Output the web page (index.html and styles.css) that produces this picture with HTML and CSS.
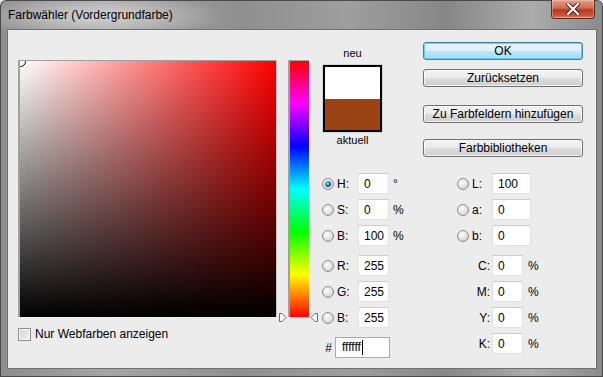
FILE: index.html
```html
<!DOCTYPE html>
<html lang="de">
<head>
    <meta charset="UTF-8">
    <meta name="viewport" content="width=device-width, initial-scale=1.0">
    <title>Farbwähler</title>
    <link rel="stylesheet" href="styles.css">
</head>
<body>
    <div class="window">
        <!-- Title bar -->
        <div class="titlebar">
            <span class="title">Farbwähler (Vordergrundfarbe)</span>
            <button class="close-btn" aria-label="Schließen">
                <svg width="14" height="12" viewBox="0 0 14 12">
                    <path d="M2 1 L12 11 M12 1 L2 11" stroke="#3a1a12" stroke-width="4" stroke-linecap="square"/>
                    <path d="M2 1 L12 11 M12 1 L2 11" stroke="#fff" stroke-width="2.2" stroke-linecap="square"/>
                </svg>
            </button>
        </div>

        <div class="client">
            <!-- Colour field + hue slider -->
            <div class="picker-pane">
                <div class="picker-row">
                    <div class="color-field">
                        <span class="field-marker"></span>
                    </div>
                    <div class="hue-wrap">
                        <div class="hue-slider"></div>
                        <svg class="arrow arrow-left" width="8" height="9" viewBox="0 0 8 9">
                            <path d="M0.5 0.5 L3 0.5 L7 4.5 L3 8.5 L0.5 8.5 Z" fill="#fff" stroke="#6a6a6a"/>
                        </svg>
                        <svg class="arrow arrow-right" width="8" height="9" viewBox="0 0 8 9">
                            <path d="M7.5 0.5 L5 0.5 L1 4.5 L5 8.5 L7.5 8.5 Z" fill="#fff" stroke="#6a6a6a"/>
                        </svg>
                    </div>
                </div>
                <label class="web-only">
                    <span class="checkbox"></span>
                    Nur Webfarben anzeigen
                </label>
            </div>

            <!-- Swatch, buttons and value fields -->
            <div class="control-pane">
                <div class="top-row">
                    <div class="swatch-block">
                        <div class="swatch-label">neu</div>
                        <div class="swatch">
                            <div class="swatch-new"></div>
                            <div class="swatch-current"></div>
                        </div>
                        <div class="swatch-label">aktuell</div>
                    </div>
                    <div class="buttons">
                        <button class="btn btn-default">OK</button>
                        <button class="btn btn-reset">Zurücksetzen</button>
                        <button class="btn btn-add">Zu Farbfeldern hinzufügen</button>
                        <button class="btn btn-lib">Farbbibliotheken</button>
                    </div>
                </div>

                <div class="fields">
                    <div class="field-col field-col-left">
                        <div class="field-row">
                            <span class="radio checked"></span>
                            <span class="field-label">H:</span>
                            <input class="text-box" type="text" value="0">
                            <span class="unit">°</span>
                        </div>
                        <div class="field-row">
                            <span class="radio"></span>
                            <span class="field-label">S:</span>
                            <input class="text-box" type="text" value="0">
                            <span class="unit">%</span>
                        </div>
                        <div class="field-row">
                            <span class="radio"></span>
                            <span class="field-label">B:</span>
                            <input class="text-box" type="text" value="100">
                            <span class="unit">%</span>
                        </div>
                        <div class="field-row group-start">
                            <span class="radio"></span>
                            <span class="field-label">R:</span>
                            <input class="text-box" type="text" value="255">
                        </div>
                        <div class="field-row">
                            <span class="radio"></span>
                            <span class="field-label">G:</span>
                            <input class="text-box" type="text" value="255">
                        </div>
                        <div class="field-row">
                            <span class="radio"></span>
                            <span class="field-label">B:</span>
                            <input class="text-box" type="text" value="255">
                        </div>
                        <div class="field-row group-start">
                            <span class="hash-label">#</span>
                            <div class="hex-box">ffffff<span class="caret"></span></div>
                        </div>
                    </div>

                    <div class="field-col field-col-right">
                        <div class="field-row">
                            <span class="radio"></span>
                            <span class="field-label lab-label">L:</span>
                            <input class="text-box wide" type="text" value="100">
                        </div>
                        <div class="field-row">
                            <span class="radio"></span>
                            <span class="field-label lab-label">a:</span>
                            <input class="text-box wide" type="text" value="0">
                        </div>
                        <div class="field-row">
                            <span class="radio"></span>
                            <span class="field-label lab-label">b:</span>
                            <input class="text-box wide" type="text" value="0">
                        </div>
                        <div class="field-row group-start">
                            <span class="cmyk-label">C:</span>
                            <input class="text-box" type="text" value="0">
                            <span class="unit cmyk-unit">%</span>
                        </div>
                        <div class="field-row">
                            <span class="cmyk-label">M:</span>
                            <input class="text-box" type="text" value="0">
                            <span class="unit cmyk-unit">%</span>
                        </div>
                        <div class="field-row">
                            <span class="cmyk-label">Y:</span>
                            <input class="text-box" type="text" value="0">
                            <span class="unit cmyk-unit">%</span>
                        </div>
                        <div class="field-row">
                            <span class="cmyk-label">K:</span>
                            <input class="text-box" type="text" value="0">
                            <span class="unit cmyk-unit">%</span>
                        </div>
                    </div>
                </div>
            </div>
        </div>
    </div>
</body>
</html>
```

FILE: styles.css
```css
* {
    margin: 0;
    padding: 0;
    box-sizing: border-box;
}

body {
    background: #e6e6e6;
    font-family: 'Liberation Sans', Arial, sans-serif;
    font-size: 12px;
    color: #000;
}

/* Window frame */
.window {
    width: 603px;
    height: 377px;
    display: flex;
    flex-direction: column;
    border-radius: 6px 6px 0 0;
    background:
        radial-gradient(ellipse 130px 22px at 95px 16px, rgba(225, 225, 225, 0.75), transparent),
        linear-gradient(to right, #8d8d8d 0%, #a6a6a6 18%, #8f8f8f 40%, #9e9e9e 58%, #868686 74%, #acacac 88%, #8a8a8a 100%);
    box-shadow: inset 0 0 0 1px #4a4a4a;
}

.titlebar {
    height: 29px;
    display: flex;
    justify-content: space-between;
    align-items: flex-start;
    padding-left: 8px;
}

.title {
    margin-top: 8px;
    line-height: 15px;
    font-size: 12px;
    color: #000;
}

.close-btn {
    width: 44px;
    height: 19px;
    margin-right: 8px;
    border: 1px solid #5a2a1c;
    border-top: none;
    border-radius: 0 0 4px 4px;
    background: linear-gradient(#e3a28f 0%, #cf6b50 45%, #b8381d 55%, #c9533a 85%, #df8a6b 100%);
    box-shadow: inset 0 0 0 1px rgba(255, 220, 200, 0.35);
    display: flex;
    align-items: center;
    justify-content: center;
}

/* Client area */
.client {
    flex: 1;
    margin: 0 6px 8px 7px;
    background: #ececec;
    border: 1px solid #707070;
    display: flex;
}

.picker-pane {
    padding: 30px 0 0 10px;
    width: 314px;
}

.picker-row {
    display: flex;
    gap: 11px;
}

.color-field {
    position: relative;
    width: 259px;
    height: 257px;
    overflow: hidden;
    border-top: 1px solid #a0a0a0;
    border-left: 2px solid #a0a0a0;
    border-right: 1px solid #c8c8c8;
    background:
        linear-gradient(to top, #000, rgba(0, 0, 0, 0)),
        linear-gradient(to right, #fff, #f00);
}

.field-marker {
    position: absolute;
    left: -5px;
    top: -5px;
    width: 11px;
    height: 11px;
    border-radius: 50%;
    border: 1px solid #000;
    box-shadow: inset 0 0 0 1px #fff;
}

.hue-wrap {
    position: relative;
}

.hue-slider {
    width: 21px;
    height: 257px;
    border-top: 1px solid #a0a0a0;
    border-left: 2px solid #a0a0a0;
    background: linear-gradient(#f00 0%, #f0f 16.67%, #00f 33.33%, #0ff 50%, #0f0 66.67%, #ff0 83.33%, #f00 100%);
}

.arrow {
    position: absolute;
    bottom: -5px;
}

.arrow-left {
    left: -9px;
}

.arrow-right {
    right: -9px;
}

.web-only {
    display: flex;
    align-items: center;
    gap: 4px;
    margin-top: 10px;
    line-height: 15px;
}

.checkbox {
    width: 13px;
    height: 13px;
    border: 1px solid #8f8f8f;
    background: linear-gradient(135deg, #d0d0d0, #f4f4f4);
    box-shadow: inset 0 0 0 1px #f8f8f8;
}

/* Right side */
.control-pane {
    padding-top: 12px;
}

.top-row {
    display: flex;
    align-items: flex-start;
}

.swatch-block {
    width: 61px;
    margin-top: 5px;
    display: flex;
    flex-direction: column;
    align-items: center;
}

.swatch-label {
    font-size: 11px;
    line-height: 13px;
}

.swatch {
    margin: 4px 0 1px;
    width: 61px;
    height: 69px;
    border: 1px solid #d4d4d4;
    display: flex;
    flex-direction: column;
}

.swatch-new {
    height: 34px;
    background: #fff;
    border: 2px solid #000;
    border-bottom: none;
}

.swatch-current {
    flex: 1;
    background: #9b4313;
    border: 2px solid #000;
    border-top: none;
}

.buttons {
    margin-left: 40px;
    width: 160px;
    display: flex;
    flex-direction: column;
}

.btn {
    height: 18px;
    font-family: 'Liberation Sans', Arial, sans-serif;
    font-size: 12px;
    font-weight: normal;
    color: #000;
    border: 1px solid #707070;
    border-radius: 3px;
    background: linear-gradient(#f2f2f2, #ebebeb 50%, #dddddd 50%, #cfcfcf);
    box-shadow: inset 0 0 0 1px rgba(255, 255, 255, 0.75);
    line-height: 15px;
}

.btn-default {
    border-color: #3c7fb1;
    background: linear-gradient(#eaf6fd, #d9f0fc 50%, #bee6fd 50%, #a7d9f5);
    box-shadow: inset 0 0 0 1px #5fd3fb;
}

.btn-reset {
    margin-top: 9px;
}

.btn-add {
    margin-top: 18px;
}

.btn-lib {
    margin-top: 16px;
}

/* Value fields */
.fields {
    display: flex;
    margin-top: 16px;
}

.field-col {
    display: flex;
    flex-direction: column;
    gap: 5px;
}

.field-col-left {
    width: 135px;
}

.field-row {
    display: flex;
    align-items: center;
    height: 21px;
}

.group-start {
    margin-top: 4px;
}

.radio {
    position: relative;
    width: 12px;
    height: 12px;
    margin-right: 3px;
    border-radius: 50%;
    border: 1px solid #8d8d8d;
    background: radial-gradient(circle at 40% 35%, #ffffff, #dadada 65%, #c2c2c2);
}

.radio.checked::after {
    content: '';
    position: absolute;
    left: 2px;
    top: 2px;
    width: 6px;
    height: 6px;
    border-radius: 50%;
    background: radial-gradient(circle at 40% 35%, #8ad6f7, #1d6594 55%, #0d2f48);
}

.field-label {
    width: 21px;
}

.text-box {
    width: 31px;
    height: 21px;
    padding-left: 5px;
    font-family: 'Liberation Sans', Arial, sans-serif;
    font-size: 12px;
    color: #000;
    background: #fff;
    border: 1px solid #e2e2e2;
    border-top-color: #cdcdcd;
    outline: none;
}

.text-box.wide {
    width: 39px;
}

.unit {
    margin-left: 4px;
}

.cmyk-unit {
    margin-left: 5px;
}

.hash-label {
    width: 13px;
    text-align: center;
}

.hex-box {
    width: 55px;
    height: 21px;
    padding-left: 6px;
    line-height: 19px;
    background: #fff;
    border: 1px solid #7eb4ea;
    display: flex;
    align-items: center;
}

.caret {
    width: 1px;
    height: 15px;
    margin-left: 1px;
    background: #000;
}

.lab-label {
    width: 20px;
}

.cmyk-label {
    width: 35px;
    padding-right: 2px;
    text-align: right;
}
```
